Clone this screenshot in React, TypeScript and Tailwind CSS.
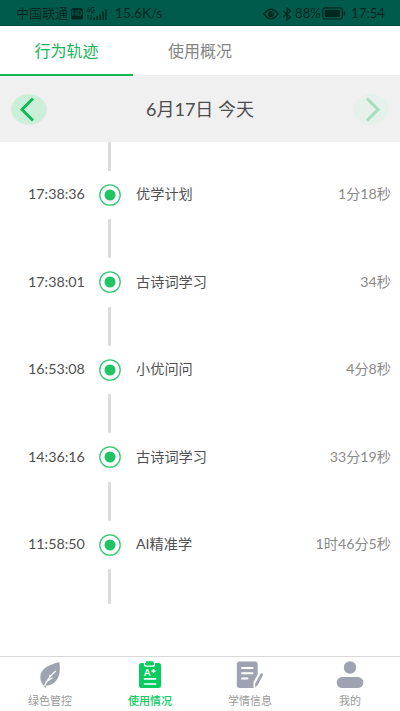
import React from 'react'

type RecordProps = {
  time: string
  name: string
  duration: string
}

const records: RecordProps[] = [
  { time: '17:38:36', name: '优学计划', duration: '1分18秒' },
  { time: '17:38:01', name: '古诗词学习', duration: '34秒' },
  { time: '16:53:08', name: '小优问问', duration: '4分8秒' },
  { time: '14:36:16', name: '古诗词学习', duration: '33分19秒' },
  { time: '11:58:50', name: 'AI精准学', duration: '1时46分5秒' },
]

const StatusBar = () => (
  <div className="flex h-[26px] shrink-0 items-center border-b border-[#004b3f] bg-[#005b4c] pr-[15px] pl-4 pt-[2px] text-[13px] text-[#00271f]">
    <span>中国联通</span>
    <svg className="ml-[3px] h-3 w-3" viewBox="0 0 12 12">
      <rect width="12" height="11.5" rx="2.5" fill="#00271f" />
      <text x="6" y="8.3" fontSize="7" fontWeight="700" textAnchor="middle" fill="#005b4c">
        HD
      </text>
    </svg>
    <svg className="ml-[3px] h-[14px] w-[22px]" viewBox="0 0 22 14">
      <text x="0.5" y="5.6" fontSize="6.5" fontWeight="700" fill="#00271f">
        4G
      </text>
      <path
        d="M2 8v4.500M1 9l1-1 1 1M5 8v4.500M4 11.500l1 1 1-1"
        fill="none"
        stroke="#00271f"
        strokeWidth="0.9"
      />
      <path
        d="M8.300 13v-2.500M11.200 13V9M14.100 13V7M17 13V4.500M19.900 13V2"
        stroke="#00271f"
        strokeWidth="1.5"
      />
    </svg>
    <span className="ml-[7px] text-[13.6px]">15.6K/s</span>
    <svg className="ml-auto h-3 w-4" viewBox="0 0 16 12">
      <path
        d="M1 6q7-9.600 14 0q-7 9.600-14 0z"
        fill="none"
        stroke="#00271f"
        strokeWidth="1.5"
      />
      <circle cx="8" cy="6" r="3" fill="#00271f" />
      <circle cx="9" cy="4.8" r="0.9" fill="#005b4c" />
    </svg>
    <svg className="ml-[3px] h-[14px] w-[10px]" viewBox="0 0 10 14">
      <path
        d="M1 4l7.500 6L5 13V1l3.500 3L1 10"
        fill="none"
        stroke="#00271f"
        strokeWidth="1.2"
      />
    </svg>
    <span className="ml-[3px] w-[25px] text-[13px] whitespace-nowrap">88%</span>
    <svg className="ml-[2px] h-[13px] w-6" viewBox="0 0 24 13">
      <rect
        x="0.8"
        y="0.8"
        width="19.5"
        height="11.2"
        rx="2.5"
        fill="none"
        stroke="#00271f"
        strokeWidth="1.2"
      />
      <rect x="2.8" y="2.8" width="15" height="7.2" rx="0.8" fill="#00271f" />
      <path d="M22.300 4.500v4" stroke="#00271f" strokeWidth="1.5" />
    </svg>
    <span className="ml-[5px] text-[13.2px]">17:54</span>
  </div>
)

const Tabs = () => (
  <div className="flex h-[50px] shrink-0 border-b border-[#eeeeee] text-[16px] leading-[49px]">
    <div className="-mb-px h-[50px] w-[133px] border-b-2 border-[#18b457] text-center text-[#18b457]">
      行为轨迹
    </div>
    <div className="w-[134px] text-center text-[#858585]">使用概况</div>
  </div>
)

const DateBar = () => (
  <div className="flex h-[66px] shrink-0 items-center justify-between bg-[#f0f0f0] px-[11px]">
    <svg className="h-[31px] w-9" viewBox="0 0 36 31">
      <ellipse cx="18" cy="15.5" rx="17.8" ry="15.3" fill="#ccefd9" />
      <path d="M22 4.500L11 15.500l11 11" fill="none" stroke="#13b85a" strokeWidth="3" />
    </svg>
    <span className="text-[18px] text-[#4d4d4d]">6月17日 今天</span>
    <svg className="h-[31px] w-9" viewBox="0 0 36 31">
      <ellipse cx="18" cy="15.5" rx="17.8" ry="15.3" fill="#e5f1ea" />
      <path d="M14 4.500l11 11-11 11" fill="none" stroke="#a5dfbc" strokeWidth="3" />
    </svg>
  </div>
)

const TimelineItem = ({ time, name, duration }: RecordProps) => (
  <div className="flex h-[48.5px] items-center pr-[9px] text-[14.2px] leading-5 text-[#505050]">
    <span className="w-[99px] pb-px pl-[28px] text-[14.3px]">{time}</span>
    <svg className="h-[22px] w-[22px] shrink-0" viewBox="0 0 22 22">
      <circle cx="11" cy="11" r="10.2" fill="none" stroke="#35c873" strokeWidth="1.3" />
      <circle cx="11" cy="11" r="5.5" fill="#1fc463" />
    </svg>
    <span className="ml-[15px] pb-px">{name}</span>
    <span className="ml-auto pb-px text-[#8a8a8a]">{duration}</span>
  </div>
)

const Timeline = () => (
  <div className="grow">
    <div className="ml-[108px] h-[28.5px] w-[3px] bg-[#dcdcdc]" />
    {records.map((record, idx) => (
      <React.Fragment key={idx}>
        <TimelineItem {...record} />
        <div
          className={`ml-[108px] w-[3px] rounded-[1px] bg-[#dcdcdc] ${
            idx === records.length - 1 ? 'h-[34.5px]' : 'h-[39px]'
          }`}
        />
      </React.Fragment>
    ))}
  </div>
)

const LeafIcon = () => (
  <svg className="h-7 w-7" viewBox="0 0 28 28">
    <path
      d="M23.300 1C14 3.500 4.500 7 4.300 16c0 4 1.800 6.500 4.200 9.700l1.200 1.200.8-2.300C20 24 26 15 23.300 1z"
      fill="#9fa2b1"
    />
    <path
      d="M8.800 25C10 20.500 14 15 19.700 10M9.500 21.200l7-4.500M13.300 17.200l.8-3.200"
      fill="none"
      stroke="#fff"
      strokeWidth="1.2"
    />
  </svg>
)

const ReportIcon = () => (
  <svg className="h-7 w-7" viewBox="0 0 28 28">
    <rect x="3" y="2" width="22" height="25" rx="2.5" fill="#0acb60" />
    <path
      d="M8.500 1.500v1.700q0 2 2 2h6q2 0 2-2V1.500"
      fill="none"
      stroke="#fff"
      strokeWidth="1.2"
    />
    <rect x="10" y="0.3" width="7.5" height="3.6" rx="1" fill="#0acb60" />
    <text x="8" y="14.6" fontSize="9" fontWeight="900" fill="#fff">
      A
    </text>
    <path d="M15.500 10h4M17.500 8v4" stroke="#fff" strokeWidth="1.5" />
    <path d="M8.500 17.800h11M8.500 23h11" stroke="#fff" strokeWidth="1.7" strokeLinecap="round" />
  </svg>
)

const NoteIcon = () => (
  <svg className="h-7 w-7" viewBox="0 0 28 28">
    <path
      d="M3.500.500h15.500q2.700 0 2.700 2.500v10.500L17.500 21v6h-14Q.8 27 .8 24.300V3Q.8.500 3.500.500z"
      fill="#9fa2b1"
    />
    <path
      d="M6 7h10.500M6 12.200h10.500M6 17.500h5.500"
      stroke="#fff"
      strokeWidth="2"
      strokeLinecap="round"
    />
    <path d="M25 12l2.300 1.300-5.500 10.800-2.600 2.500-.1-3.800z" fill="#9fa2b1" />
  </svg>
)

const UserIcon = () => (
  <svg className="h-7 w-7" viewBox="0 0 28 28">
    <circle cx="14" cy="6.5" r="6.2" fill="#9fa2b1" />
    <rect x="0.7" y="16" width="26.6" height="11" rx="5.5" fill="#9fa2b1" />
  </svg>
)

const navItems = [
  { label: '绿色管控', icon: <LeafIcon /> },
  { label: '使用情况', icon: <ReportIcon />, active: true },
  { label: '学情信息', icon: <NoteIcon /> },
  { label: '我的', icon: <UserIcon /> },
]

const BottomNav = () => (
  <nav className="grid h-[55px] shrink-0 grid-cols-4 border-t border-[#d9d9d9]">
    {navItems.map((item, idx) => (
      <div className="flex flex-col items-center pt-[4px]" key={idx}>
        {item.icon}
        <span
          className={`mt-[4px] text-[11px] leading-4 ${
            item.active ? 'font-medium text-[#0acb60]' : 'text-[#999999]'
          }`}
        >
          {item.label}
        </span>
      </div>
    ))}
  </nav>
)

const App = () => {
  return (
    <div className="flex h-[711px] w-[400px] flex-col overflow-hidden bg-white font-[Lato,'Noto_Sans_CJK_SC',sans-serif]">
      <StatusBar />
      <Tabs />
      <DateBar />
      <Timeline />
      <BottomNav />
    </div>
  )
}

export default App
